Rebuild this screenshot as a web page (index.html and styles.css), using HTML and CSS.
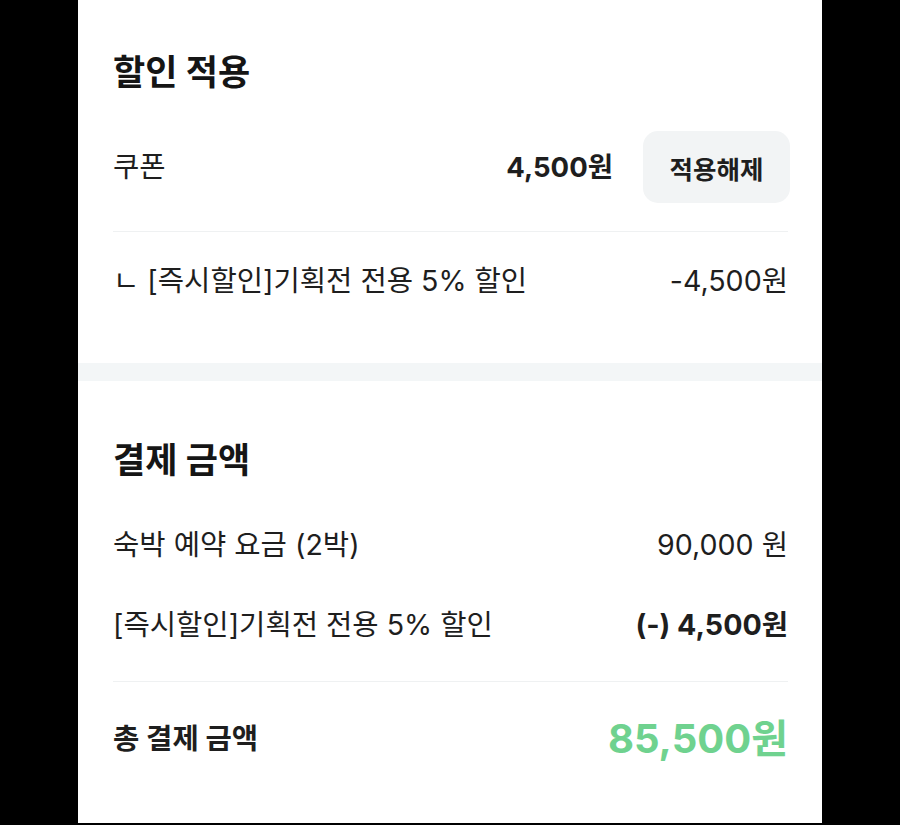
FILE: index.html
```html
<!DOCTYPE html>
<html lang="ko">
<head>
  <meta charset="UTF-8">
  <meta name="viewport" content="width=device-width, initial-scale=1.0">
  <title>결제 금액</title>
  <link rel="stylesheet" href="styles.css">
</head>
<body>
  <div class="panel">
    <!-- 할인 적용 -->
    <section class="section discount">
      <h2 class="title">할인 적용</h2>
      <div class="row coupon">
        <span class="label">쿠폰</span>
        <div class="coupon-right">
          <span class="amount bold">4,500원</span>
          <button class="btn-cancel">적용해제</button>
        </div>
      </div>
      <div class="row sub">
        <span class="label">ㄴ [즉시할인]기획전 전용 5% 할인</span>
        <span class="amount">-4,500원</span>
      </div>
    </section>

    <div class="band"></div>

    <!-- 결제 금액 -->
    <section class="section payment">
      <h2 class="title">결제 금액</h2>
      <div class="row price">
        <span class="label">숙박 예약 요금 (2박)</span>
        <span class="amount">90,000 원</span>
      </div>
      <div class="row price last">
        <span class="label">[즉시할인]기획전 전용 5% 할인</span>
        <span class="amount bold">(-) 4,500원</span>
      </div>
      <div class="row total">
        <span class="label">총 결제 금액</span>
        <span class="total-amount">85,500원</span>
      </div>
    </section>
  </div>
</body>
</html>
```

FILE: styles.css
```css
:root {
  --text-color: #1e1e1e;
  --line-color: #eff1f2;
  --band-color: #f3f6f7;
  --button-bg: #f2f4f5;
  --green: #6fd28f;
}

body {
  margin: 0;
  background-color: #000000;
  font-family: Inter, "Noto Sans CJK KR", sans-serif;
  color: var(--text-color);
}

.panel {
  width: 744px;
  margin-left: 78px;
  background-color: #ffffff;
}

.section {
  padding: 0 34px 0 35px;
}

.title {
  margin: 0;
  font-size: 35px;
  line-height: 42px;
  font-weight: bold;
  color: #151515;
}

.row {
  display: flex;
  justify-content: space-between;
  align-items: center;
  font-size: 28.6px;
  line-height: 36px;
}

.bold {
  font-weight: bold;
}

/* 할인 적용 */
.discount {
  padding-top: 51px;
  padding-bottom: 64px;
}

.coupon {
  margin-top: 38px;
  padding-bottom: 28px;
  border-bottom: 1px solid var(--line-color);
}

.coupon-right {
  display: flex;
  align-items: center;
  gap: 30px;
  margin-right: -2px;
}

.coupon .amount {
  font-size: 27.5px;
}

.btn-cancel {
  width: 147px;
  height: 72px;
  border: none;
  border-radius: 15px;
  background-color: var(--button-bg);
  font-family: inherit;
  font-size: 25.5px;
  font-weight: bold;
  color: var(--text-color);
  cursor: pointer;
}

.sub {
  padding-top: 31px;
}

.band {
  height: 18px;
  background-color: var(--band-color);
}

/* 결제 금액 */
.payment {
  padding-top: 58px;
  padding-bottom: 59px;
}

.price {
  margin-top: 44px;
}

.price:first-of-type {
  margin-top: 46px;
}

.price.last {
  padding-bottom: 38px;
  border-bottom: 1px solid var(--line-color);
}

.total {
  padding-top: 32px;
  line-height: 50px;
}

.total .label {
  font-weight: bold;
}

.total-amount {
  font-size: 40px;
  font-weight: bold;
  color: var(--green);
}
```
